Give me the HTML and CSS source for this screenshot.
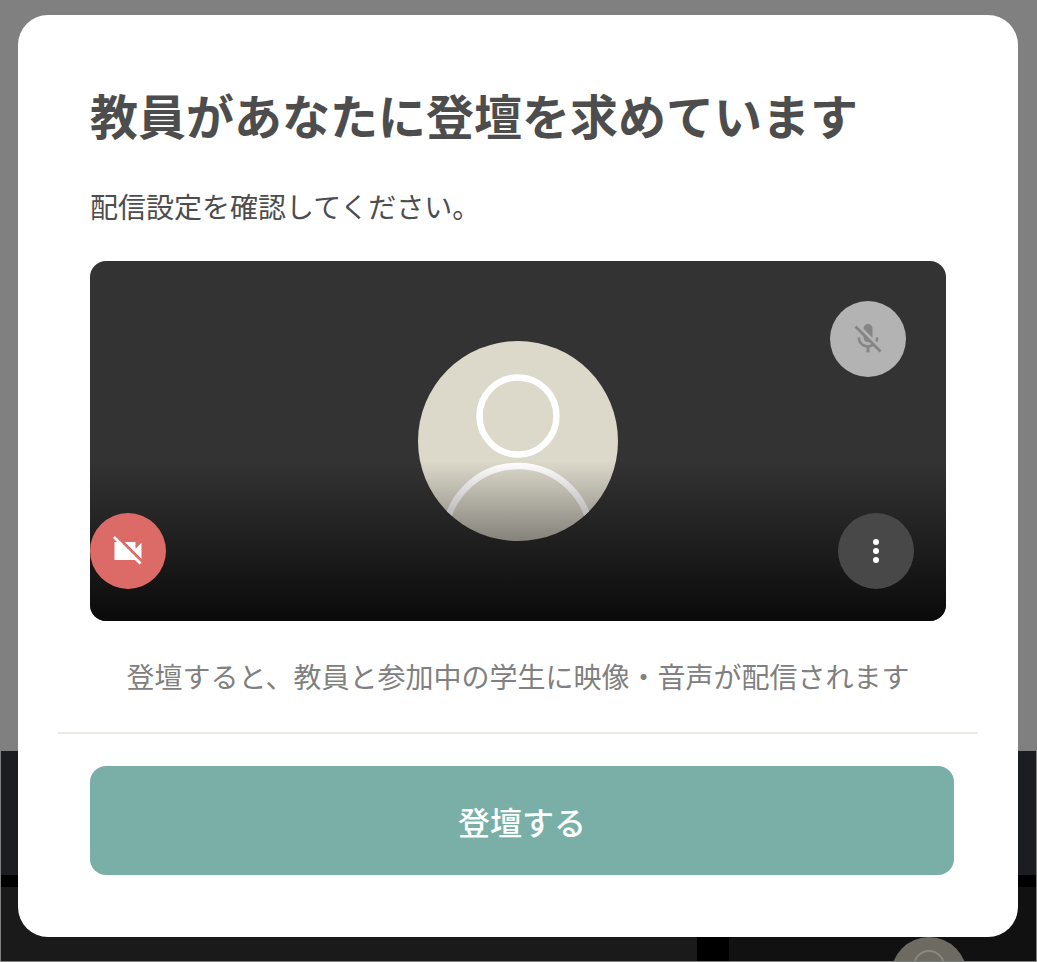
FILE: index.html
```html
<!DOCTYPE html>
<html lang="ja">
<head>
<meta charset="utf-8">
<title>登壇リクエスト</title>
<link rel="stylesheet" href="styles.css">
</head>
<body>
<div class="stage">
  <div class="stage-top"></div>
  <div class="stage-bar"></div>
  <div class="stage-gap"></div>
  <div class="stage-tiles">
    <div class="tile-main"></div>
    <div class="tile-side">
      <div class="side-avatar"><div class="side-avatar-ring"></div></div>
    </div>
  </div>
</div>
<div class="modal">
  <div class="modal-body">
    <h1 class="title">教員があなたに登壇を求めています</h1>
    <p class="lead">配信設定を確認してください。</p>
    <div class="video">
      <div class="avatar">
        <svg class="avatar-svg" viewBox="0 0 200 200" aria-hidden="true">
          <circle cx="100" cy="75" r="38.5" fill="none" stroke="#fff" stroke-width="6.5"></circle>
          <circle cx="100" cy="198" r="73" fill="none" stroke="#fff" stroke-width="6.5"></circle>
        </svg>
      </div>
      <div class="shade"></div>
      <button class="round mic" type="button" aria-label="マイク">
        <svg viewBox="0 0 24 24" width="36" height="36" aria-hidden="true">
          <path fill="#858585" d="M19 11h-1.7c0 .74-.16 1.43-.43 2.05l1.23 1.23c.56-.98.9-2.09.9-3.28zm-4.02.17c0-.06.02-.11.02-.17V5c0-1.66-1.34-3-3-3S9 3.34 9 5v.18l5.98 5.99zM4.27 3L3 4.27l6.01 6.01V11c0 1.66 1.33 3 2.99 3 .22 0 .44-.03.65-.08l1.66 1.66c-.71.33-1.5.52-2.31.52-2.76 0-5.3-2.1-5.3-5.1H5c0 3.41 2.72 6.23 6 6.72V21h2v-3.28c.91-.13 1.77-.45 2.54-.9L19.73 21 21 19.73 4.27 3z"></path>
        </svg>
      </button>
      <button class="round cam" type="button" aria-label="カメラ">
        <svg viewBox="0 0 24 24" width="36" height="36" aria-hidden="true">
          <path fill="#fff" d="M21 6.5l-4 4V6H9.82L21 17.18V6.5zM3.27 2L2 3.27 4.73 6H3v12h13.6L19.73 21 21 19.73 3.27 2z"></path>
        </svg>
      </button>
      <button class="round more" type="button" aria-label="その他">
        <span class="dot"></span><span class="dot"></span><span class="dot"></span>
      </button>
    </div>
    <p class="note">登壇すると、教員と参加中の学生に映像・音声が配信されます</p>
  </div>
  <div class="divider"></div>
  <div class="modal-foot">
    <button class="join" type="button">登壇する</button>
  </div>
</div>
</body>
</html>
```
FILE: styles.css
```css
* { box-sizing: border-box; }
html, body { margin: 0; height: 100%; }
body {
  width: 1037px;
  height: 962px;
  overflow: hidden;
  position: relative;
  background: #808080;
  font-family: "Noto Sans CJK JP", "Noto Sans", sans-serif;
}
.stage {
  height: 962px;
  padding: 0 1px 1px;
  display: flex;
  flex-direction: column;
  background: #808080;
}
.stage-top { height: 751px; background: #808080; margin: 0 -1px; }
.stage-bar { height: 124px; background: #1c1d21; }
.stage-gap { height: 12px; background: #000; }
.stage-tiles { height: 74px; display: flex; background: #000; }
.tile-main { width: 696px; background: #1a1a1a; }
.tile-side {
  width: 307px;
  margin-left: 32px;
  background: #111;
  display: flex;
  overflow: hidden;
  flex: none;
  padding-left: 162px;
}
.side-avatar {
  width: 76px;
  height: 76px;
  margin-top: 50px;
  border-radius: 50%;
  background: #6d6a62;
  flex: none;
  display: flex;
  justify-content: center;
  padding-top: 13px;
}
.side-avatar-ring {
  width: 32px;
  height: 32px;
  border-radius: 50%;
  border: 2px solid #8a8882;
}
.modal {
  position: absolute;
  left: 18px;
  top: 15px;
  width: 1000px;
  height: 922px;
  background: #fff;
  border-radius: 30px;
  display: flex;
  flex-direction: column;
}
.modal-body { padding: 0 72px; height: 717px; }
.title {
  margin: 0;
  padding-top: 67px;
  font-size: 48px;
  line-height: 64px;
  font-weight: 700;
  color: #4d4d4d;
  white-space: nowrap;
}
.lead {
  margin: 38px 0 0;
  font-size: 28px;
  line-height: 44px;
  color: #4d4d4d;
}
.video {
  position: relative;
  width: 856px;
  height: 360px;
  margin-top: 33px;
  border-radius: 16px;
  overflow: hidden;
  background: #333;
  display: flex;
  align-items: center;
  justify-content: center;
}
.avatar {
  width: 200px;
  height: 200px;
  border-radius: 50%;
  overflow: hidden;
  background: #dcd9cb;
}
.avatar-svg { display: block; width: 200px; height: 200px; }
.shade {
  position: absolute;
  left: 0;
  right: 0;
  bottom: 0;
  height: 160px;
  background: linear-gradient(to bottom, rgba(0,0,0,0), rgba(0,0,0,.8));
}
.round {
  position: absolute;
  width: 76px;
  height: 76px;
  padding: 0;
  border: 0;
  border-radius: 50%;
  display: flex;
  flex-direction: column;
  align-items: center;
  justify-content: center;
}
.mic { top: 40px; left: 740px; background: #b3b3b3; }
.cam { top: 252px; left: 0; background: #dc6b67; }
.more { top: 252px; left: 748px; background: #484848; gap: 3px; }
.dot { width: 6px; height: 6px; border-radius: 50%; background: #fff; }
.note {
  margin: 33px 0 0;
  font-size: 28px;
  line-height: 44px;
  text-align: center;
  color: #808080;
  white-space: nowrap;
}
.divider {
  height: 2px;
  margin: 0 40px;
  background: #ebebe6;
}
.modal-foot { padding: 32px 64px 0 72px; }
.join {
  display: block;
  width: 864px;
  height: 109px;
  border: 0;
  border-radius: 16px;
  background: #79afa7;
  color: #fff;
  font-family: inherit;
  font-size: 32px;
  font-weight: 500;
}
```
